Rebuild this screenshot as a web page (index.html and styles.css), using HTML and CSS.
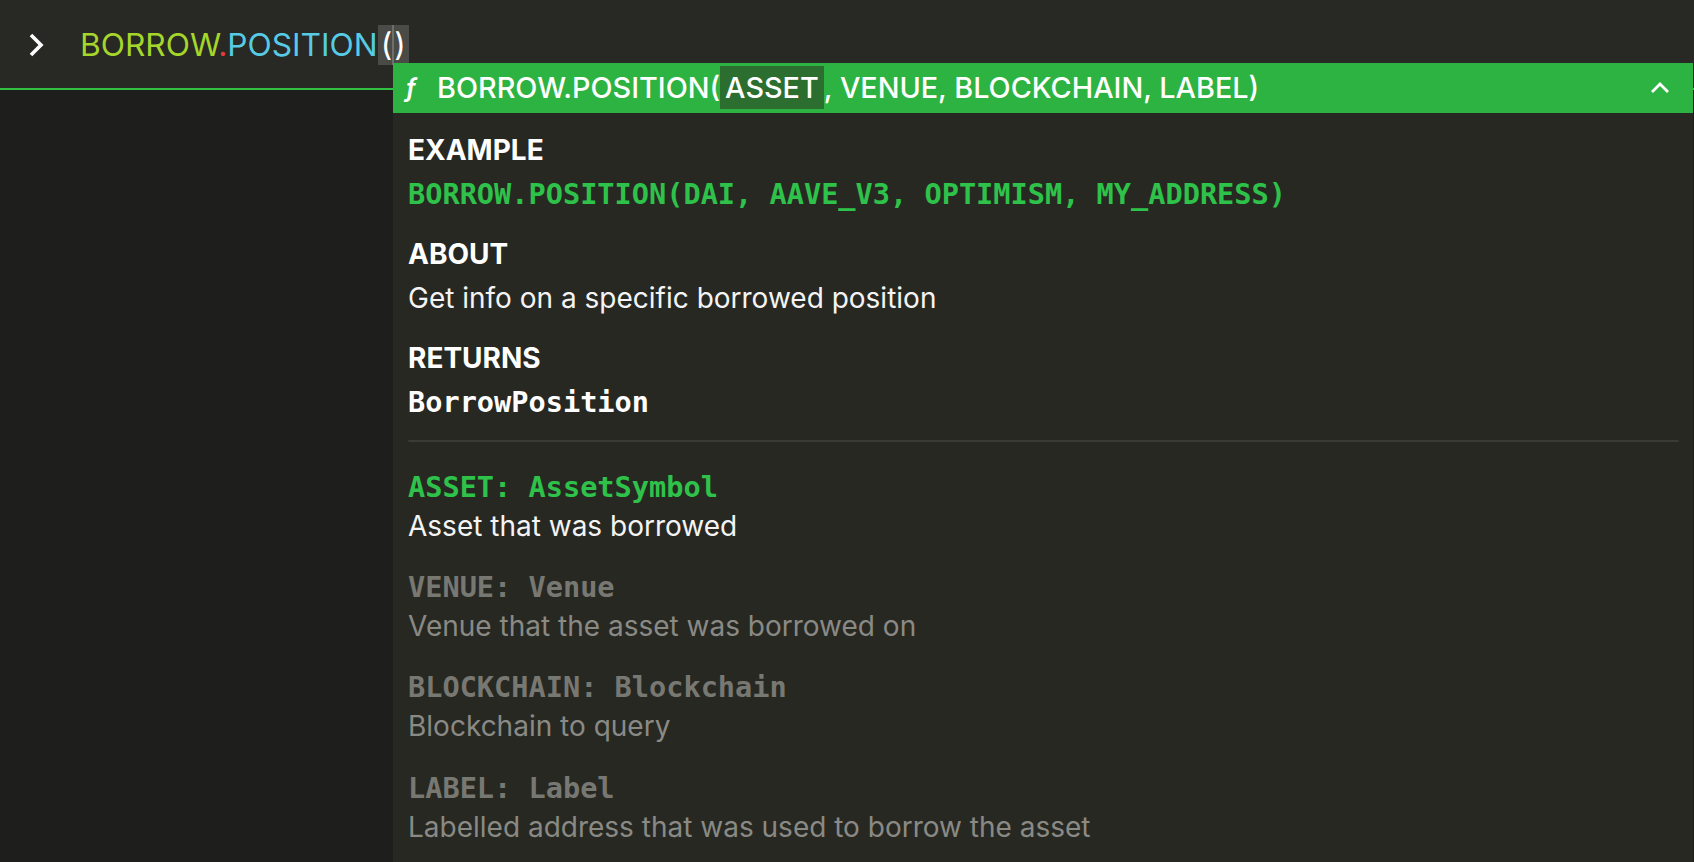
FILE: index.html
```html
<!DOCTYPE html>
<html>
<head>
<meta charset="utf-8">
<link rel="stylesheet" href="styles.css">
</head>
<body>
<div class="app">
  <div class="cmdbar">
    <svg class="prompt" width="16" height="26" viewBox="0 0 16 26"><polyline points="3,3 13,13 3,23" fill="none" stroke="#ffffff" stroke-width="3.6"/></svg>
    <div class="cmd"><span class="ns">BORROW</span><span class="dot">.</span><span class="fn">POSITION</span><span class="parens">(<span class="caret"></span>)</span></div>
  </div>
  <div class="popup">
    <div class="sig">
      <span class="fglyph">ƒ</span>
      <span class="sigtext">BORROW.POSITION(<span class="cur">ASSET</span>, VENUE, BLOCKCHAIN, LABEL)</span>
      <svg class="collapse" width="20" height="14" viewBox="0 0 20 14"><polyline points="2,11 10,3 18,11" fill="none" stroke="#ffffff" stroke-width="2.8"/></svg>
    </div>
    <div class="body">
      <div class="sec">
        <div class="h">EXAMPLE</div>
        <div class="code">BORROW.POSITION(DAI, AAVE_V3, OPTIMISM, MY_ADDRESS)</div>
      </div>
      <div class="sec">
        <div class="h">ABOUT</div>
        <div class="txt">Get info on a specific borrowed position</div>
      </div>
      <div class="sec">
        <div class="h">RETURNS</div>
        <div class="ret">BorrowPosition</div>
      </div>
      <div class="divider"></div>
      <div class="params">
        <div class="param active">
          <div class="pname">ASSET: AssetSymbol</div>
          <div class="pdesc">Asset that was borrowed</div>
        </div>
        <div class="param">
          <div class="pname">VENUE: Venue</div>
          <div class="pdesc">Venue that the asset was borrowed on</div>
        </div>
        <div class="param">
          <div class="pname">BLOCKCHAIN: Blockchain</div>
          <div class="pdesc">Blockchain to query</div>
        </div>
        <div class="param">
          <div class="pname">LABEL: Label</div>
          <div class="pdesc">Labelled address that was used to borrow the asset</div>
        </div>
      </div>
    </div>
  </div>
</div>
</body>
</html>
```
FILE: styles.css
```css
html, body {
  margin: 0;
  padding: 0;
}
body {
  background: #1e1e1c;
  font-family: Inter, "Noto Sans", "Liberation Sans", sans-serif;
  color: #ffffff;
}
.app {
  position: relative;
  width: 1694px;
  height: 862px;
  overflow: hidden;
  background: #1e1e1c;
}
.cmdbar {
  height: 88px;
  background: #282824;
  border-bottom: 2px solid #30c043;
  display: flex;
  align-items: center;
  padding-left: 28px;
}
.prompt {
  display: block;
  margin-top: 1px;
}
.cmd {
  margin-left: 36px;
  font-size: 31.7px;
  line-height: 40px;
  font-weight: 400;
  white-space: nowrap;
  margin-top: 1px;
}
.ns { color: #a4d62b; }
.dot { color: #e23b3b; }
.fn { color: #57cbe4; }
.parens {
  display: inline-block;
  background: #4a4a47;
  color: #ffffff;
  padding: 0 3px;
}
.caret {
  display: inline-block;
  width: 2px;
  height: 40px;
  background: #6e6e6b;
  vertical-align: top;
}
.popup {
  position: absolute;
  left: 393px;
  top: 63px;
  width: 1300px;
  bottom: 0;
  background: #282823;
}
.sig {
  height: 50px;
  background: #2db341;
  display: flex;
  align-items: center;
  padding-left: 12px;
  padding-right: 23px;
}
.fglyph {
  font-size: 26px;
  font-style: italic;
  font-weight: 600;
  width: 32px;
  line-height: 50px;
}
.sigtext {
  font-size: 28.8px;
  font-weight: 500;
  line-height: 50px;
  white-space: nowrap;
  flex: 1;
}
.cur {
  background: #2b6e30;
  padding: 4px 5px;
}
.collapse { display: block; }
.body {
  padding: 15px 14px 0 15px;
}
.sec {
  margin-bottom: 16px;
}
.h {
  font-size: 28px;
  font-weight: 700;
  line-height: 44px;
  color: #ffffff;
}
.code, .ret, .pname {
  font-family: "DejaVu Sans Mono", "Liberation Mono", monospace;
  font-size: 28.6px;
  font-weight: 700;
  line-height: 44px;
  white-space: nowrap;
}
.code { color: #2ec24a; }
.ret { color: #ffffff; }
.txt {
  font-size: 28px;
  line-height: 44px;
  color: #f4f4f4;
}
.divider {
  height: 2px;
  border-radius: 1px;
  background: #3a3a36;
  margin-top: 4px;
}
.params {
  padding-top: 26px;
  display: flex;
  flex-direction: column;
  gap: 22.2px;
}
.param .pname {
  line-height: 39px;
  color: #787873;
}
.param .pdesc {
  font-size: 28px;
  line-height: 39px;
  color: #8a8a85;
}
.param.active .pname { color: #2ec24a; }
.param.active .pdesc { color: #f4f4f4; }
```
